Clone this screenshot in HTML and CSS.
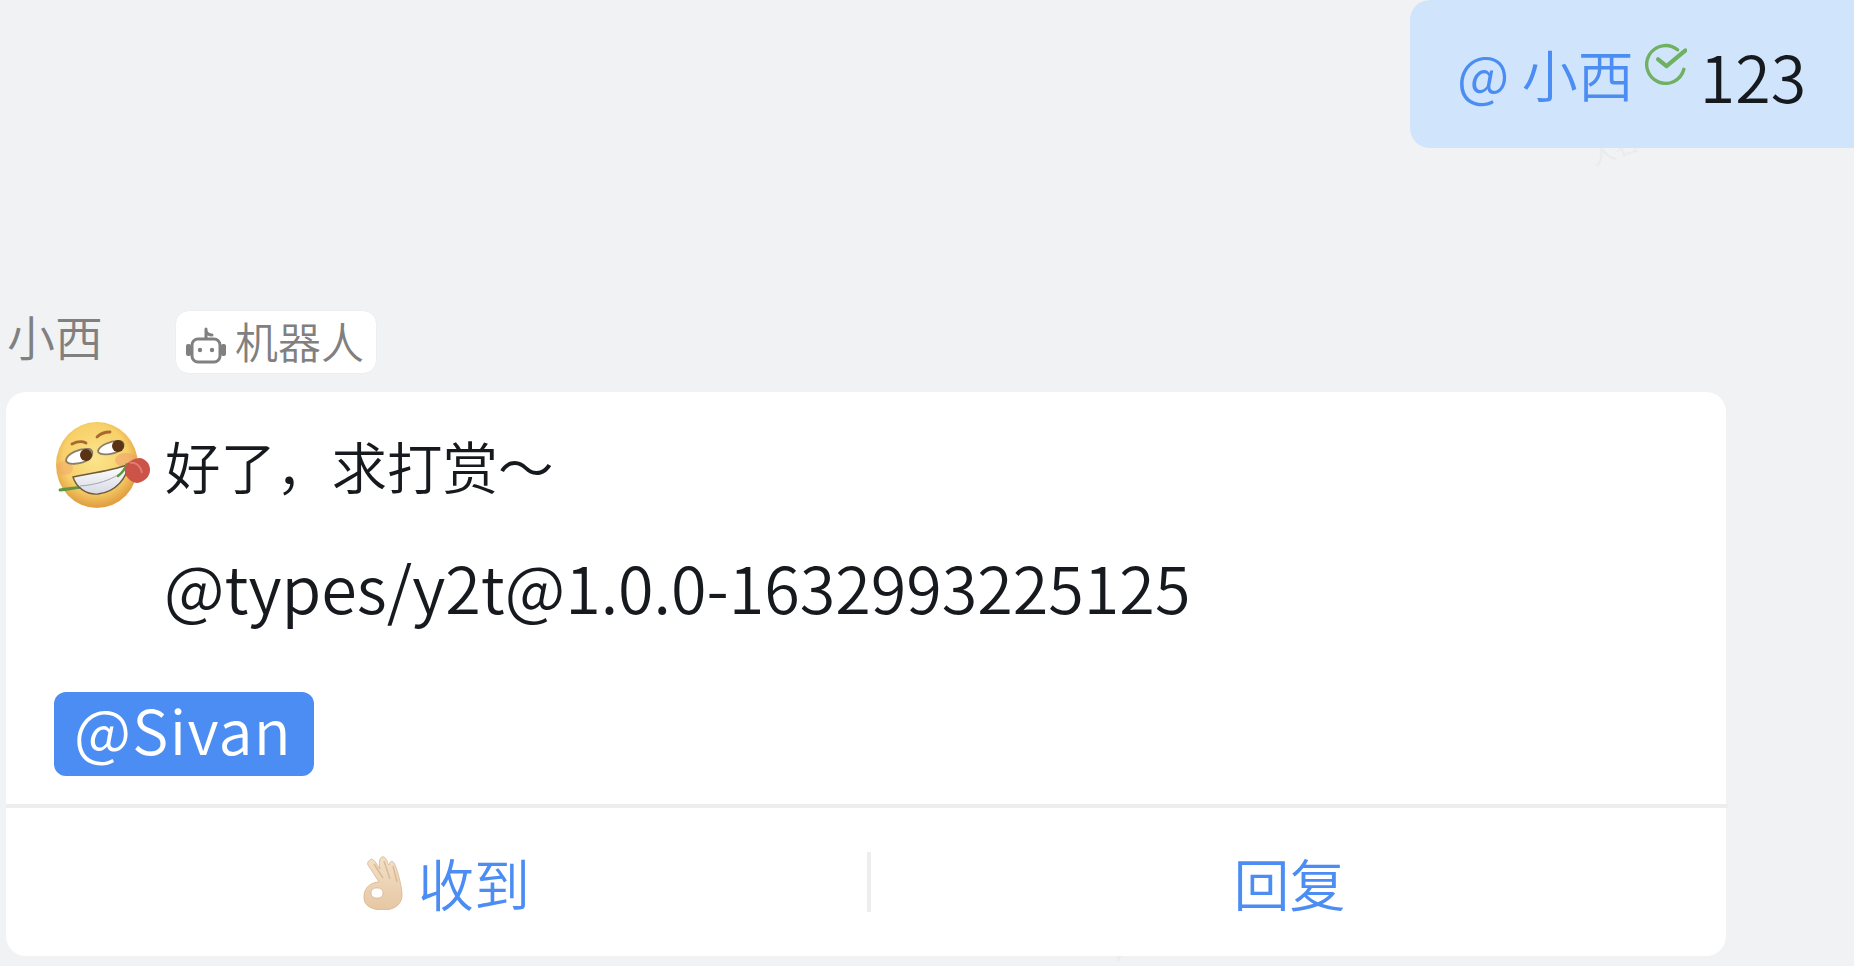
FILE: index.html
```html
<!DOCTYPE html>
<html lang="zh-CN">
<head>
<meta charset="utf-8">
<title>消息</title>
<link rel="stylesheet" href="styles.css">
</head>
<body>
<main class="chat">
  <span class="watermark wm-top">人名</span>
  <span class="watermark wm-bottom">人名</span>
  <section class="outgoing">
    <div class="bubble">
      <span class="mention">@ 小西</span>
      <svg class="read-icon" viewBox="0 0 40 40" aria-hidden="true">
        <path d="M31 6.500A18 18 0 1 0 37 25" fill="none" stroke="#6fb061" stroke-width="3.200" stroke-linecap="round"/>
        <path d="M12.500 15.500l8 6.500L38.500 7" fill="none" stroke="#6fb061" stroke-width="4" stroke-linecap="round" stroke-linejoin="round"/>
      </svg>
      <span class="count">123</span>
    </div>
  </section>

  <section class="incoming">
    <header class="sender">
      <span class="sender-name">小西</span>
      <span class="bot-badge">
        <svg class="bot-icon" viewBox="0 0 42 38" aria-hidden="true">
          <rect x="7" y="13" width="28" height="23" rx="6" fill="none" stroke="#808080" stroke-width="3"/>
          <path d="M21 12V3M21 5c1 3 4 4 6 4" fill="none" stroke="#808080" stroke-width="3" stroke-linecap="round"/>
          <rect x="1" y="18" width="5" height="12" rx="2" fill="#808080"/>
          <rect x="36" y="18" width="5" height="12" rx="2" fill="#808080"/>
          <circle cx="15" cy="24" r="2.200" fill="#808080"/>
          <circle cx="27" cy="24" r="2.200" fill="#808080"/>
        </svg>
        <span class="bot-label">机器人</span>
      </span>
    </header>

    <article class="card">
      <div class="card-body">
        <div class="line-first">
          <svg class="emoji-rose" viewBox="0 0 94 86" aria-hidden="true">
            <defs>
              <radialGradient id="face" cx="48%" cy="42%" r="56%">
                <stop offset="0" stop-color="#fbe58c"/>
                <stop offset="0.7" stop-color="#f7d069"/>
                <stop offset="1" stop-color="#e2a043"/>
              </radialGradient>
              <linearGradient id="teeth" x1="0" y1="0" x2="0" y2="1">
                <stop offset="0" stop-color="#ffffff"/>
                <stop offset="1" stop-color="#d6dae4"/>
              </linearGradient>
            </defs>
            <ellipse cx="41" cy="43" rx="41" ry="43" fill="url(#face)"/>
            <ellipse cx="70" cy="38" rx="11" ry="7" fill="#ef9a6e" opacity="0.5"/>
            <ellipse cx="9" cy="46" rx="8" ry="7" fill="#ef9a6e" opacity="0.4"/>
            <path d="M16 22c4-2 10-3 14-1" fill="none" stroke="#a9692c" stroke-width="2.800" stroke-linecap="round"/>
            <path d="M41 15c3-3 8-5 13-5" fill="none" stroke="#a9692c" stroke-width="2.800" stroke-linecap="round"/>
            <path d="M10 38c1-6 13-12 23-11 5 1 4 8-1 11-7 4-22 6-22 0z" fill="#fff" stroke="#8c7d66" stroke-width="1.800"/>
            <circle cx="30" cy="33" r="6" fill="#5a3214"/>
            <path d="M42 29c1-5 13-11 22-10 5 1 5 7-1 10-7 4-21 5-21 0z" fill="#fff" stroke="#8c7d66" stroke-width="1.800"/>
            <circle cx="62" cy="24" r="6" fill="#5a3214"/>
            <path d="M4 68c8-1 14-2 22-3" fill="none" stroke="#5f9642" stroke-width="2.800" stroke-linecap="round"/>
            <path d="M17 55C30 52 55 49 71 43 72 55 60 70 42 72 30 73 20 65 17 55z" fill="url(#teeth)" stroke="#6f5a3c" stroke-width="1.400"/>
            <path d="M24 64c16-1 32-6 44-15" fill="none" stroke="#a3a6ab" stroke-width="1"/>
            <path d="M62 54c4-3 7-7 9-12" fill="none" stroke="#5f9642" stroke-width="2.400" stroke-linecap="round"/>
            <path d="M69 47C70 40 78 36 84 36 90 37 94 42 94 48 94 55 88 60 81 61 74 60 68 54 69 47z" fill="#cc5347"/>
            <path d="M74 41c6-1 11 3 12 10" fill="none" stroke="#de7c70" stroke-width="2"/>
          </svg>
          <span class="greeting">好了，求打赏～</span>
        </div>
        <p class="package">@types/y2t@1.0.0-1632993225125</p>
        <span class="tag">@Sivan</span>
      </div>
      <footer class="actions">
        <button class="action action-ok" type="button">
          <svg class="emoji-ok" viewBox="0 0 40 55" aria-hidden="true">
            <defs>
              <linearGradient id="skin" x1="0" y1="0" x2="0" y2="1">
                <stop offset="0" stop-color="#f3e0c8"/>
                <stop offset="1" stop-color="#e6c7a3"/>
              </linearGradient>
            </defs>
            <path fill-rule="evenodd" fill="url(#skin)" stroke="#d3ad85" stroke-width="0.700" d="M7 5C9 3 11 5 13 8L17 14C16 9 16 3 19 2 22 1 24 5 25 9L26 10C27 6 29 5 31 8 34 13 38 28 39 38 40 48 33 55 20 55 8 55 0 50 1 41 1 33 8 27 16 27L5 10C4 8 5 6 7 5zM14 33C10 33 8 35 8 38S10 43 14 43 20 41 20 38 18 33 14 33z"/>
            <path d="M11 9l9 14M21 6l6 18M30 11l4 16" stroke="#dcbc98" stroke-width="1.600" fill="none"/>
          </svg>
          <span>收到</span>
        </button>
        <button class="action action-reply" type="button"><span>回复</span></button>
      </footer>
    </article>
  </section>
</main>
</body>
</html>
```
FILE: styles.css
```css
* {
  box-sizing: border-box;
}

html,
body {
  margin: 0;
  height: 100%;
}

body {
  background: #f0f2f4;
  overflow: hidden;
  font-family: "Noto Sans CJK SC", "Noto Sans", sans-serif;
  font-weight: 350;
  color: #16191d;
}

.chat {
  position: relative;
  display: flex;
  flex-direction: column;
  width: 1854px;
  height: 966px;
}

.watermark {
  position: absolute;
  color: #ebebed;
  font-size: 24px;
  line-height: 1;
  transform: rotate(-20deg);
}

.wm-top {
  left: 1590px;
  top: 136px;
}

.wm-bottom {
  left: 1110px;
  top: 931px;
}

.outgoing {
  position: relative;
  display: flex;
  justify-content: flex-end;
}

.bubble {
  display: flex;
  align-items: flex-start;
  width: 444px;
  height: 148px;
  padding: 35px 0 0 47px;
  background: #d0e5fb;
  border-radius: 0 0 0 20px;
  border-top-left-radius: 20px;
}

.mention {
  color: #4b8df2;
  font-size: 56px;
  line-height: 76px;
  white-space: nowrap;
}

.read-icon {
  flex: none;
  width: 42px;
  height: 42px;
  margin: 8px 0 0 11px;
}

.count {
  margin-left: 13px;
  font-size: 64.500px;
  line-height: 80px;
}

.incoming {
  position: relative;
  display: flex;
  flex-direction: column;
  margin-top: 163px;
}

.sender {
  display: flex;
  align-items: flex-start;
  height: 61px;
  padding-left: 7px;
}

.sender-name {
  width: 168px;
  color: #808080;
  font-size: 48px;
  line-height: 60px;
  margin-top: -6px;
}

.bot-badge {
  display: flex;
  align-items: center;
  gap: 8px;
  width: 202px;
  height: 64px;
  margin-top: -1px;
  padding-left: 9px;
  background: #fff;
  border: 1px solid #eceef1;
  border-radius: 14px;
  color: #808080;
  font-size: 43px;
  line-height: 58px;
}

.bot-label {
  margin-top: -5px;
}

.bot-icon {
  flex: none;
  width: 42px;
  height: 38px;
  margin-top: 6px;
}

.card {
  display: flex;
  flex-direction: column;
  width: 1720px;
  height: 564px;
  margin: 20px 0 0 6px;
  background: #fff;
  border-radius: 20px;
}

.card-body {
  flex: none;
  height: 412px;
  padding: 30px 0 0 48px;
}

.line-first {
  display: flex;
  align-items: center;
  height: 86px;
}

.emoji-rose {
  flex: none;
  width: 94px;
  height: 86px;
  margin-left: 2px;
}

.greeting {
  margin-left: 15px;
  font-size: 55.500px;
  line-height: 86px;
  white-space: nowrap;
}

.package {
  margin: 40px 0 0;
  padding-left: 110px;
  font-size: 64.700px;
  line-height: 76px;
  white-space: nowrap;
}

.tag {
  display: inline-block;
  width: 260px;
  height: 84px;
  margin-top: 68px;
  padding-left: 20px;
  background: #4b8df2;
  border-radius: 12px;
  color: #fff;
  font-size: 61px;
  line-height: 74px;
  letter-spacing: 1.300px;
}

.actions {
  position: relative;
  display: flex;
  flex: 1;
  align-items: center;
  width: 1722px;
  border-top: 4px solid #ededee;
}

.action {
  display: flex;
  flex: none;
  align-items: center;
  justify-content: center;
  height: 60px;
  padding: 0;
  background: none;
  border: 0;
  color: #4b8df2;
  font-family: inherit;
  font-size: 56px;
  font-weight: 350;
  line-height: 56px;
}

.action-ok {
  gap: 15px;
  width: 861px;
  padding-left: 20px;
}

.action-reply {
  flex: 1;
  border-left: 4px solid #ededee;
  padding-right: 20px;
}

.emoji-ok {
  flex: none;
  width: 40px;
  height: 55px;
}
```
